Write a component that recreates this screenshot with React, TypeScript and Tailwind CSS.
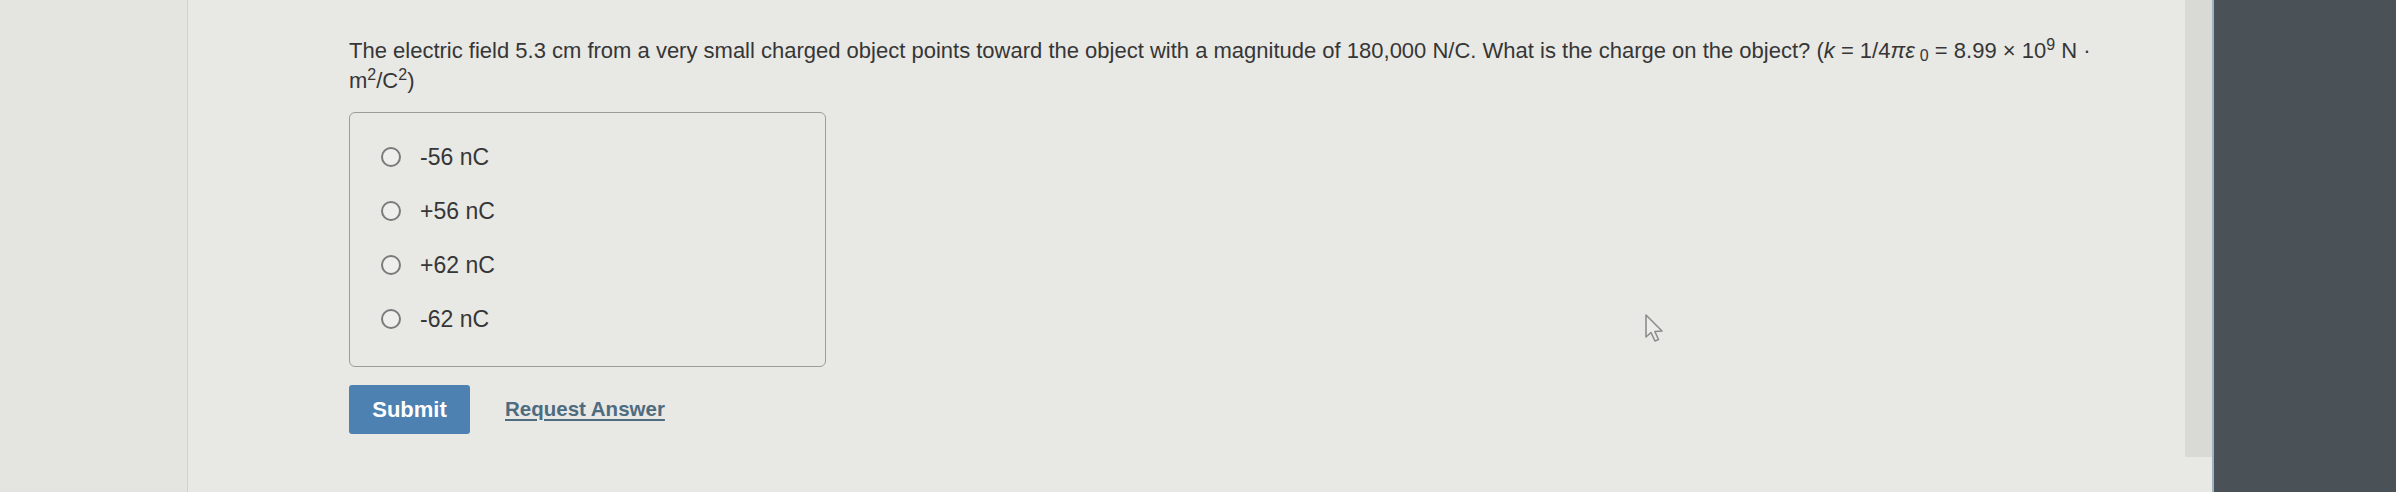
const options = ['-56 nC', '+56 nC', '+62 nC', '-62 nC'];

function Cursor() {
  return (
    <svg
      className="pointer-events-none absolute left-[1644px] top-[313px]"
      width="22"
      height="32"
      viewBox="0 0 22 32"
      fill="none"
    >
      <path
        d="M2 2 L2 24 L7 19.5 L11 28 L14.5 26.5 L10.8 18.5 L18 18 Z"
        stroke="#8d8d8d"
        strokeWidth="1.6"
        strokeLinejoin="round"
        fill="#ececea"
      />
    </svg>
  );
}

export default function App() {
  return (
    <div
      className="relative flex h-[492px] w-full overflow-hidden bg-[#e8e8e5] text-[#363636]"
      style={{ fontFamily: '"Liberation Sans", Arial, sans-serif' }}
    >
      <div className="h-full w-[188px] shrink-0 border-r border-[#d2d2cf] bg-[#e4e4e1]" />

      <div className="flex-1 pl-[161px] pt-[36px]">
        <p className="text-[22px] leading-[30px]">
          The electric field 5.3 cm from a very small charged object points toward the object with a
          magnitude of 180,000 N/C. What is the charge on the object? (<i>k</i> = 1/4
          <i>πε</i>
          <sub className="relative top-[3px] ml-[5px] text-[16px]">0</sub> = 8.99 × 10
          <sup className="text-[16px]">9</sup> N ·
          <br />
          m<sup className="text-[16px]">2</sup>/C<sup className="text-[16px]">2</sup>)
        </p>

        <div className="mt-[16px] w-[477px] rounded-[6px] border border-[#9c9c9a] pb-[20px] pl-[31px] pt-[17px]">
          {options.map((o) => (
            <label key={o} className="flex h-[54px] items-center gap-[19px]">
              <span className="h-[20px] w-[20px] rounded-full border-[2px] border-[#7b7b7b] bg-[#eeeeec]" />
              <span className="text-[23px]">{o}</span>
            </label>
          ))}
        </div>

        <div className="mt-[18px] flex items-center gap-[35px]">
          <button
            type="button"
            className="h-[49px] w-[121px] rounded-[3px] bg-[#4d81b2] text-[22px] font-bold text-white"
          >
            Submit
          </button>
          <a className="text-[20.5px] font-bold text-[#4f6b80] underline underline-offset-[3px]">
            Request Answer
          </a>
        </div>
      </div>

      <div className="flex h-full w-[211px] shrink-0">
        <div className="h-[457px] w-[27px] bg-[#d9d9d6]" />
        <div className="w-[2px] bg-[#9fb2c2]" />
        <div className="flex-1 bg-[#4a5257]" />
      </div>

      <Cursor />
    </div>
  );
}
